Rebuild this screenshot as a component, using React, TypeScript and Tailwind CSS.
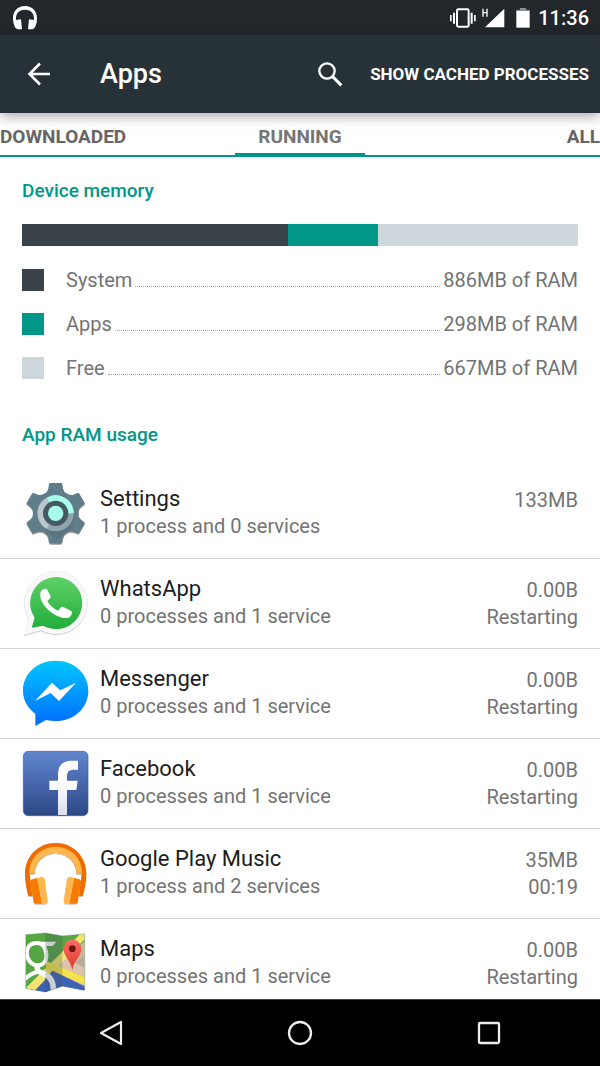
import type { ReactNode } from "react";

const memory = [
  { label: "System", amount: 886, color: "bg-[#384248]" },
  { label: "Apps", amount: 298, color: "bg-[#009688]" },
  { label: "Free", amount: 667, color: "bg-[#ced7db]" },
];

const totalMemory = memory.reduce((sum, item) => sum + item.amount, 0);

function AppIcon({ children }: { children: ReactNode }) {
  return (
    <svg
      className="w-[68px] h-[70px] shrink-0"
      viewBox="33 24 204 210"
      aria-hidden="true"
    >
      {children}
    </svg>
  );
}

function SettingsIcon() {
  return (
    <AppIcon>
      <defs>
        <filter id="gearShadow" x="-10%" y="-10%" width="120%" height="125%">
          <feDropShadow dx="0" dy="3" stdDeviation="2" floodOpacity="0.4" />
        </filter>
      </defs>
      <g fill="#607d8b" filter="url(#gearShadow)">
        <circle cx="137" cy="130" r="68" />
        {[0, 60, 120, 180, 240, 300].map((angle) => (
          <path
            key={angle}
            d="M102 72 Q113 66 115 56 L117 43 Q118 39 122 39 H152 Q156 39 157 43 L159 56 Q161 66 172 72 L137 130 Z"
            transform={`rotate(${angle} 137 130)`}
          />
        ))}
      </g>
      <path d="M101 173 L137 209 Q155 204 158 190 L190 175 L190 130 Z" fill="#546e7a" opacity="0.5" />
      <circle cx="137" cy="130" r="54" fill="#90a4ae" />
      <path d="M137 130 L110 83 A54 54 0 0 0 110 177 Z" fill="#b9c6cc" />
      <path d="M137 130 L110 83 A54 54 0 0 1 191 130 Z" fill="#a7ffeb" />
      <circle cx="137" cy="130" r="38" fill="#455a64" />
      <circle cx="137" cy="130" r="23" fill="#a7ffeb" />
    </AppIcon>
  );
}

function WhatsAppIcon() {
  return (
    <AppIcon>
      <defs>
        <linearGradient id="waGreen" x1="0" y1="0" x2="0" y2="1">
          <stop offset="0" stopColor="#5fd069" />
          <stop offset="1" stopColor="#22ad3a" />
        </linearGradient>
        <filter id="waShadow" x="-10%" y="-10%" width="120%" height="120%">
          <feDropShadow dx="0" dy="1" stdDeviation="2" floodOpacity="0.6" />
        </filter>
      </defs>
      <path
        d="M43 225 L56 176 A95 94 0 1 1 93 211 Z"
        fill="#f8f8f8"
        filter="url(#waShadow)"
      />
      <path
        d="M65 203 L74 173 A78 78 0 1 1 100 197 Z"
        fill="url(#waGreen)"
      />
      <path
        d="M91 98 Q94 87 105 86 Q110 86 112 90 L121 107 Q123 111 120 115 L112 124 Q122 142 144 152 L153 142 Q156 139 160 141 L182 152 Q187 154 186 158 Q183 173 170 174 Q156 176 136 165 Q108 150 95 124 Q89 110 91 98 Z"
        fill="#fff"
      />
    </AppIcon>
  );
}

function MessengerIcon() {
  return (
    <AppIcon>
      <defs>
        <linearGradient id="msgBlue" x1="0" y1="0" x2="0" y2="1">
          <stop offset="0" stopColor="#00c6ff" />
          <stop offset="1" stopColor="#006cff" />
        </linearGradient>
      </defs>
      <path
        d="M137 32 C81 32 39 71 39 122 C39 150 53 174 76 191 V228 L108 210 C117 212 127 213 137 213 C193 213 235 173 235 122 C235 71 193 32 137 32 Z"
        fill="url(#msgBlue)"
      />
      <path d="M75 153 L126 98 L151 121 L198 98 L147 153 L122 129 Z" fill="#fff" />
    </AppIcon>
  );
}

function FacebookIcon() {
  return (
    <AppIcon>
      <defs>
        <linearGradient id="fbBlue" x1="0" y1="0" x2="0" y2="1">
          <stop offset="0" stopColor="#6186d0" />
          <stop offset="1" stopColor="#2c4785" />
        </linearGradient>
        <linearGradient id="fbWhite" x1="0" y1="0" x2="0" y2="1">
          <stop offset="0.4" stopColor="#fff" />
          <stop offset="1" stopColor="#d8def0" />
        </linearGradient>
      </defs>
      <rect x="40" y="34" width="194" height="193" rx="15" fill="url(#fbBlue)" stroke="#3f5b99" strokeWidth="2" />
      <path
        d="M144 225 V150 H118 V122 H144 V104 Q144 63 183 62 H204 V89 H189 Q171 89 171 107 V122 H203 L199 150 H171 V225 Z"
        fill="url(#fbWhite)"
      />
    </AppIcon>
  );
}

function PlayMusicIcon() {
  return (
    <AppIcon>
      <defs>
        <filter id="musicShadow" x="-10%" y="-10%" width="120%" height="125%">
          <feDropShadow dx="0" dy="2" stdDeviation="2" floodOpacity="0.35" />
        </filter>
      </defs>
      <g filter="url(#musicShadow)">
        <path
          d="M137 39 C84 39 45 79 45 132 C45 155 50 178 55 198 H67 L59 131 L74 131 C75 96 101 69 137 69 C173 69 199 96 200 131 L215 131 L207 198 H218 C224 178 229 155 229 132 C229 79 190 39 137 39 Z"
          fill="#ef6c00"
        />
        <path
          d="M58 131 C58 83 92 51 137 51 C182 51 216 83 216 131 H200 C199 96 173 70 137 70 C101 70 75 96 74 131 Z"
          fill="#ffb74d"
        />
        <path d="M61 155 Q61 149 67 148 L82 144 L96 221 H76 Q72 221 71 217 Z" fill="#f57c00" />
        <path d="M82 144 L94 141 Q102 140 104 148 L113 213 Q113 221 107 221 H96 Z" fill="#ffb74d" />
        <path d="M213 155 Q213 149 207 148 L192 144 L178 221 H198 Q202 221 203 217 Z" fill="#f57c00" />
        <path d="M192 144 L182 141 Q173 140 171 148 L161 213 Q161 221 167 221 H178 Z" fill="#ffb74d" />
      </g>
    </AppIcon>
  );
}

function MapsIcon() {
  return (
    <AppIcon>
      <defs>
        <clipPath id="mapShape">
          <path d="M47 44 L106 39 L157 48 L224 42 V211 L157 198 L106 216 L47 205 Z" />
        </clipPath>
        <linearGradient id="pinRed" x1="0" y1="0" x2="0" y2="1">
          <stop offset="0" stopColor="#fb6d62" />
          <stop offset="1" stopColor="#dd382d" />
        </linearGradient>
      </defs>
      <path
        d="M47 44 L106 39 L157 48 L224 42 V211 L157 198 L106 216 L47 205 Z"
        fill="none"
        stroke="#d5d5d5"
        strokeWidth="4"
      />
      <g clipPath="url(#mapShape)">
        <path d="M40 30 H230 V220 H40 Z" fill="#56a543" />
        <path d="M117 150 L224 65 V220 H117 Z" fill="#dcc3ab" />
        <path d="M177 103 L224 64 V112 L196 130 Z" fill="#c8b59d" />
        <path d="M196 128 L224 107 V143 Z" fill="#b8aa98" />
        <path d="M47 204 L87 173 L132 158 L224 205 V220 H47 Z" fill="#3f62b5" />
        <path d="M44 207 L210 43 H224 V58 L70 216 Z" fill="#f4e570" />
        <path d="M108 123 L224 172 V194 L108 145 Z" fill="#f4e349" />
        <path d="M105 220 V174 L128 152 L224 199 V220 Z" fill="#3f62b5" />
        <path
          d="M80 69 C58 69 48 86 51 104 C54 126 69 136 81 136 C104 136 111 119 109 102 C107 83 98 69 80 69 Z"
          fill="none"
          stroke="#fff"
          strokeWidth="12"
        />
        <path d="M86 65 H139 L128 78 H105 Z" fill="#fff" />
        <path
          d="M85 135 Q76 149 91 157 Q135 170 129 215"
          fill="none"
          stroke="#fff"
          strokeWidth="16"
        />
        <path d="M91 154 Q64 158 43 179" fill="none" stroke="#fff" strokeWidth="12" />
        <path d="M106 35 L157 45 V202 L106 220 Z" fill="#45515c" opacity="0.28" />
      </g>
      <path
        d="M187 150 C182 119 161 110 161 86 A26 27 0 0 1 214 86 C214 110 192 119 187 150 Z"
        fill="url(#pinRed)"
      />
      <circle cx="187" cy="86" r="10" fill="#6c1712" />
    </AppIcon>
  );
}

const apps = [
  {
    name: "Settings",
    detail: "1 process and 0 services",
    size: "133MB",
    status: "",
    icon: <SettingsIcon />,
  },
  {
    name: "WhatsApp",
    detail: "0 processes and 1 service",
    size: "0.00B",
    status: "Restarting",
    icon: <WhatsAppIcon />,
  },
  {
    name: "Messenger",
    detail: "0 processes and 1 service",
    size: "0.00B",
    status: "Restarting",
    icon: <MessengerIcon />,
  },
  {
    name: "Facebook",
    detail: "0 processes and 1 service",
    size: "0.00B",
    status: "Restarting",
    icon: <FacebookIcon />,
  },
  {
    name: "Google Play Music",
    detail: "1 process and 2 services",
    size: "35MB",
    status: "00:19",
    icon: <PlayMusicIcon />,
  },
  {
    name: "Maps",
    detail: "0 processes and 1 service",
    size: "0.00B",
    status: "Restarting",
    icon: <MapsIcon />,
  },
];

function StatusBar() {
  return (
    <div className="flex h-[35px] shrink-0 items-center justify-between bg-[#21272b] pl-3 pr-[11px] text-white">
      <svg className="h-6 w-[26px]" viewBox="0 0 78 72" fill="#fff" aria-hidden="true">
        <path d="M39 0 C17 0 3 15 3 37 C3 49 6 59 10 65 L16 70 H30 L27 40 L12 42 V37 C12 21 23 11 39 11 C55 11 66 21 66 37 V42 L51 40 L48 70 H62 L68 65 C72 59 75 49 75 37 C75 15 61 0 39 0 Z" />
      </svg>
      <div className="flex items-center">
        <svg className="h-5 w-[26px]" viewBox="0 0 78 60" aria-hidden="true">
          <rect x="21" y="4" width="35" height="52" rx="4" fill="none" stroke="#fff" strokeWidth="6" />
          <path d="M0 21 H5 V40 H0 Z M9 14 H15 V47 H9 Z M62 14 H68 V47 H62 Z M72 21 H77 V40 H72 Z" fill="#fff" />
        </svg>
        <svg className="ml-1.5 h-5 w-[23px]" viewBox="0 0 69 60" fill="#fff" aria-label="H signal">
          <path d="M67 2 V58 H9 Z" />
          <path d="M3 2 V26 M15 2 V26 M3 14 H15" stroke="#fff" strokeWidth="4" />
        </svg>
        <svg className="ml-[11px] h-5 w-3.5" viewBox="0 0 42 60" aria-hidden="true">
          <path d="M12 0 H30 V5 H41 V10 H1 V5 H12 Z" fill="#8b8f91" />
          <path d="M1 9 H41 V59 H1 Z" fill="#fff" />
        </svg>
        <span className="ml-2 text-[20px] leading-6 font-medium">11:36</span>
      </div>
    </div>
  );
}

function Toolbar() {
  return (
    <header className="relative z-10 flex h-[78px] shrink-0 items-center bg-[#273238] pl-[27px] pr-[11px] text-white shadow-[0_3px_12px_rgba(40,20,30,0.4)]">
      <button type="button" aria-label="Back">
        <svg className="size-6" viewBox="0 0 24 24" fill="none" stroke="#fff" strokeWidth="2.6">
          <path d="M23 12 H3 M13 1.500 L2.500 12 L13 22.500" />
        </svg>
      </button>
      <h1 className="ml-[49px] grow text-[27px] leading-8 font-medium">Apps</h1>
      <button type="button" aria-label="Search">
        <svg className="size-[26px]" viewBox="0 0 78 78" fill="none" stroke="#fff">
          <circle cx="30" cy="30" r="23" strokeWidth="7" />
          <path d="M47 47 L73 73" strokeWidth="9" />
        </svg>
      </button>
      <button type="button" className="ml-[27px] text-[17px] leading-6 font-bold">
        SHOW CACHED PROCESSES
      </button>
    </header>
  );
}

function Tabs() {
  return (
    <nav className="grid h-11 shrink-0 grid-cols-[1fr_130px_1fr] border-b-2 border-[#009688] text-[19px] leading-6 font-bold text-[#666]">
      <button type="button" className="pt-1.5 text-left">
        DOWNLOADED
      </button>
      <button type="button" className="-mb-0.5 border-b-4 border-[#009688] pt-2 text-center text-[#757575]">
        RUNNING
      </button>
      <button type="button" className="pt-1.5 text-right">
        ALL
      </button>
    </nav>
  );
}

function DeviceMemory() {
  return (
    <section className="px-[22px] pt-[22px]">
      <h2 className="text-[19px] leading-6 font-medium text-[#009688]">Device memory</h2>
      <div className="mt-[21px] mb-3 flex h-[22px]">
        {memory.map((item) => (
          <div
            key={item.label}
            className={item.color}
            style={{ width: `${(item.amount / totalMemory) * 100}%` }}
          />
        ))}
      </div>
      {memory.map((item) => (
        <div key={item.label} className="flex h-11 items-center text-[20px] leading-6 text-[#737373]">
          <span className={`mr-[22px] size-[22px] ${item.color}`} />
          <span>{item.label}</span>
          <span className="mx-[3px] mt-3 grow border-b border-dotted border-[#aaa]" />
          <span>{item.amount}MB of RAM</span>
        </div>
      ))}
    </section>
  );
}

function AppList() {
  return (
    <section>
      <h2 className="mt-[33px] mb-[22px] px-[22px] text-[19px] leading-6 font-medium text-[#009688]">
        App RAM usage
      </h2>
      <ul>
        {apps.map((app) => (
          <li
            key={app.name}
            className="flex h-[90px] items-center border-b border-[#d2d2d2] pb-0.5 pl-[21px] pr-[22px]"
          >
            {app.icon}
            <div className="ml-[11px] grow">
              <h3 className="text-[22px] leading-7 text-[#1c1c1c]">{app.name}</h3>
              <p className="text-[20px] leading-[27px] text-[#737373]">{app.detail}</p>
            </div>
            <div className="mt-0.5 h-[54px] text-right text-[20px] leading-[27px] text-[#737373]">
              <p>{app.size}</p>
              <p>{app.status}</p>
            </div>
          </li>
        ))}
      </ul>
    </section>
  );
}

function NavigationBar() {
  return (
    <nav className="grid h-[67px] shrink-0 grid-cols-3 items-center justify-items-center border-t border-[#444] bg-black px-[17px]">
      <button type="button" aria-label="Back">
        <svg className="size-7" viewBox="0 0 28 28" fill="none" stroke="#eee" strokeWidth="2.2" strokeLinejoin="round">
          <path d="M24 3 V25 L4 14 Z" />
        </svg>
      </button>
      <button type="button" aria-label="Home">
        <svg className="size-7" viewBox="0 0 28 28" fill="none" stroke="#eee" strokeWidth="2.3">
          <circle cx="14" cy="14" r="11" />
        </svg>
      </button>
      <button type="button" aria-label="Recent apps">
        <svg className="size-7" viewBox="0 0 28 28" fill="none" stroke="#eee" strokeWidth="2.3">
          <rect x="4" y="4" width="20" height="20" rx="1" />
        </svg>
      </button>
    </nav>
  );
}

export default function App() {
  return (
    <div className="flex h-screen flex-col bg-white font-['Roboto',sans-serif]">
      <StatusBar />
      <Toolbar />
      <Tabs />
      <main className="min-h-0 grow overflow-y-auto [scrollbar-width:none]">
        <DeviceMemory />
        <AppList />
      </main>
      <NavigationBar />
    </div>
  );
}
